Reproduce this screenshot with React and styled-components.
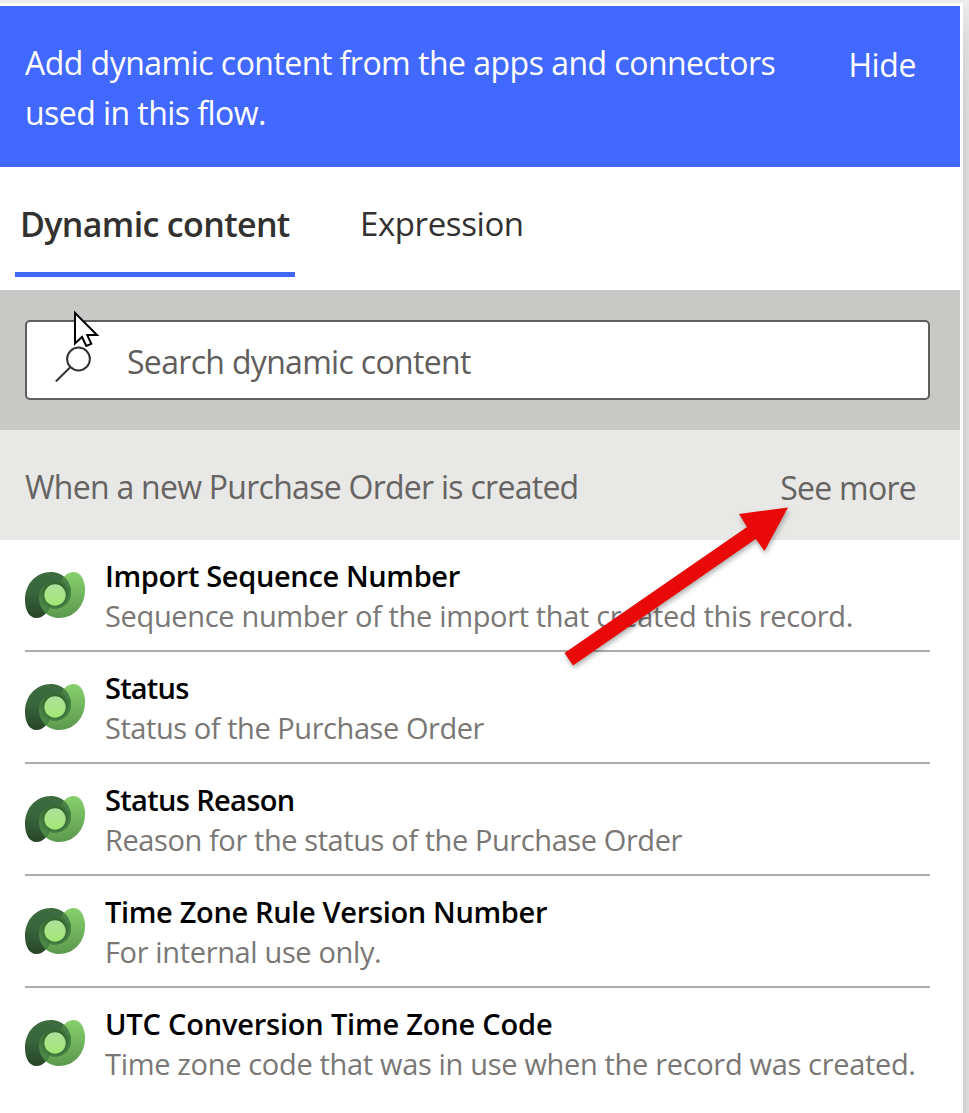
import React from "react";
import styled, { createGlobalStyle } from "styled-components";

const GlobalStyle = createGlobalStyle`
  * { box-sizing: border-box; }
  body {
    margin: 0;
    background: #d9d9d9;
    font-family: "Open Sans", "Noto Sans", sans-serif;
    overflow: hidden;
  }
`;

const Backdrop = styled.div`
  position: relative;
  width: 969px;
  height: 1113px;
  padding: 3px 6px 0 0;
  overflow: hidden;
  background:
    linear-gradient(to bottom, #ececec 0, rgba(226, 226, 226, 0.5) 40px, rgba(217, 217, 217, 0) 110px),
    linear-gradient(to right, #e7e7e7 0, #e5e5e5 958px, #cfcfcf 963px, #dcdcdc 969px);
`;

const Panel = styled.section`
  height: 1110px;
  padding: 3px 3px 0 0;
  background: #fff;
`;

const Label = styled.span`
  white-space: nowrap;
  letter-spacing: ${(p) => p.$tracking || 0}px;
`;

const Banner = styled.header`
  display: flex;
  justify-content: space-between;
  height: 161px;
  padding: 32px 44px 0 25px;
  background: #4168ff;
  color: #fff;
  font-size: 32px;
  line-height: 50px;
`;

const BannerText = styled.div`
  display: flex;
  flex-direction: column;
`;

const HideButton = styled.button`
  align-self: flex-start;
  padding: 2px 0 0;
  border: 0;
  background: none;
  color: inherit;
  font: inherit;
`;

const Tabs = styled.nav`
  display: flex;
  gap: 60px;
  height: 123px;
  padding-left: 15px;
`;

const Tab = styled.button`
  height: 110px;
  padding: 32px 6px 23px 5px;
  border: 0;
  border-bottom: 5px solid ${(p) => (p.$active ? "#4168ff" : "transparent")};
  background: none;
  color: #323130;
  font-family: inherit;
  font-size: ${(p) => (p.$active ? 34 : 33)}px;
  font-weight: ${(p) => (p.$active ? 600 : 400)};
  line-height: 50px;
  ${(p) => p.$active && "width: 280px;"}
  text-align: left;
`;

const SearchArea = styled.div`
  height: 140px;
  padding: 30px 30px 30px 25px;
  background: #c8c8c6;
`;

const SearchBox = styled.div`
  display: flex;
  align-items: center;
  height: 80px;
  padding: 3px 0 0 26px;
  border: 2px solid #605e5c;
  border-radius: 5px;
  background: #fff;
  color: #605e5c;
  font-size: 32px;
  line-height: 50px;
`;

const SearchIcon = styled.svg`
  width: 40px;
  height: 40px;
  margin-right: 34px;
`;

const SectionHeader = styled.div`
  display: flex;
  justify-content: space-between;
  height: 110px;
  padding: 32px 44px 0 25px;
  background: #e8e8e6;
  color: #666462;
  font-size: 32px;
  line-height: 50px;
`;

const SeeMore = styled.a`
  padding-top: 1px;
`;

const List = styled.ul`
  margin: 0;
  padding: 0 30px 0 25px;
  list-style: none;
`;

const Item = styled.li`
  display: flex;
  height: 112px;
  padding-top: 16px;
  border-bottom: 2px solid #acacac;
  &:last-child { border-bottom: 0; }
`;

const ItemIcon = styled.svg`
  flex: none;
  width: 60px;
  height: 46px;
  margin: 16px 20px 0 0;
`;

const ItemText = styled.div`
  display: flex;
  flex-direction: column;
  font-size: 29px;
  line-height: 40px;
`;

const ItemTitle = styled(Label)`
  color: #000;
  font-weight: 600;
`;

const ItemDescription = styled(Label)`
  color: #797775;
`;

const Pointer = styled.svg`
  position: absolute;
  left: 70px;
  top: 306px;
  width: 34px;
  height: 46px;
`;

const Arrow = styled.svg`
  position: absolute;
  left: 550px;
  top: 495px;
  width: 260px;
  height: 190px;
  filter: drop-shadow(1px 3px 2.5px rgba(0, 0, 0, 0.3));
`;

const LEAF =
  "M0 28C0 12 11 0 26 0C38 0 46 9.500 46 20.500C46 29.500 39 36.500 30 36.500C28 36.500 26.500 36 25 35C22 41 18 46 11.500 46C4 46 0 38 0 28Z";

const items = [
  { title: "Import Sequence Number", t: -0.36, text: "Sequence number of the import that created this record.", d: -0.34 },
  { title: "Status", t: -0.8, text: "Status of the Purchase Order", d: -0.44 },
  { title: "Status Reason", t: -0.66, text: "Reason for the status of the Purchase Order", d: -0.41 },
  { title: "Time Zone Rule Version Number", t: -0.34, text: "For internal use only.", d: -0.36 },
  { title: "UTC Conversion Time Zone Code", t: -0.2, text: "Time zone code that was in use when the record was created.", d: -0.33 },
];

function DataverseIcon({ id }) {
  return (
    <ItemIcon viewBox="0 0 60 46" aria-hidden="true">
      <defs>
        <linearGradient id={`dark${id}`} x1="0.5" y1="0" x2="0.3" y2="1">
          <stop offset="0" stopColor="#3c6c40" />
          <stop offset="0.5" stopColor="#38653b" />
          <stop offset="1" stopColor="#284629" />
        </linearGradient>
        <linearGradient id={`light${id}`} x1="0" y1="46" x2="0" y2="0" gradientUnits="userSpaceOnUse">
          <stop offset="0" stopColor="#88d06c" />
          <stop offset="1" stopColor="#5b984d" />
        </linearGradient>
        <linearGradient id={`core${id}`} x1="0" y1="0" x2="0" y2="1">
          <stop offset="0" stopColor="#afdf9b" />
          <stop offset="1" stopColor="#a1e873" />
        </linearGradient>
        <radialGradient id={`ring${id}`} cx="30" cy="24.500" r="17" gradientUnits="userSpaceOnUse">
          <stop offset="0.6" stopColor="#34652f" />
          <stop offset="0.85" stopColor="#447f41" />
          <stop offset="1" stopColor="#4a8646" />
        </radialGradient>
        <clipPath id={`clip${id}`}>
          <path d={LEAF} />
        </clipPath>
      </defs>
      <path d={LEAF} transform="rotate(180 30 23)" fill={`url(#light${id})`} />
      <path d={LEAF} fill={`url(#dark${id})`} />
      <g clipPath={`url(#clip${id})`}>
        <path d={LEAF} transform="rotate(180 30 23)" fill={`url(#ring${id})`} />
      </g>
      <circle cx="30" cy="23" r="10.7" fill={`url(#core${id})`} />
    </ItemIcon>
  );
}

export default function App() {
  return (
    <Backdrop>
      <GlobalStyle />
      <Panel>
        <Banner>
          <BannerText>
            <Label $tracking={-0.52}>Add dynamic content from the apps and connectors</Label>
            <Label $tracking={-0.55}>used in this flow.</Label>
          </BannerText>
          <HideButton><Label $tracking={-0.4}>Hide</Label></HideButton>
        </Banner>
        <Tabs>
          <Tab $active><Label $tracking={-0.65}>Dynamic content</Label></Tab>
          <Tab><Label $tracking={-0.4}>Expression</Label></Tab>
        </Tabs>
        <SearchArea>
          <SearchBox>
            <SearchIcon viewBox="0 0 40 40" fill="none" stroke="#333" strokeWidth="2">
              <circle cx="25.500" cy="17" r="11.400" />
              <path d="M17.500 25L2.800 39.500" />
            </SearchIcon>
            <Label $tracking={-0.68}>Search dynamic content</Label>
          </SearchBox>
        </SearchArea>
        <SectionHeader>
          <Label $tracking={-0.73}>When a new Purchase Order is created</Label>
          <SeeMore><Label $tracking={-0.75}>See more</Label></SeeMore>
        </SectionHeader>
        <List>
          {items.map((item, i) => (
            <Item key={item.title}>
              <DataverseIcon id={i} />
              <ItemText>
                <ItemTitle $tracking={item.t}>{item.title}</ItemTitle>
                <ItemDescription $tracking={item.d}>{item.text}</ItemDescription>
              </ItemText>
            </Item>
          ))}
        </List>
      </Panel>
      <Pointer viewBox="70 306 34 46">
        <path d="M75 313V343.500L82 337L86.300 346L91.300 343.800L87.200 335H97Z" fill="#fff" stroke="#000" strokeWidth="2" />
      </Pointer>
      <Arrow viewBox="550 495 260 190">
        <path d="M788 507.500L764.500 551L755.700 539L573 665.500L564.500 653L747 527L739 514Z" fill="#e90909" />
      </Arrow>
    </Backdrop>
  );
}
